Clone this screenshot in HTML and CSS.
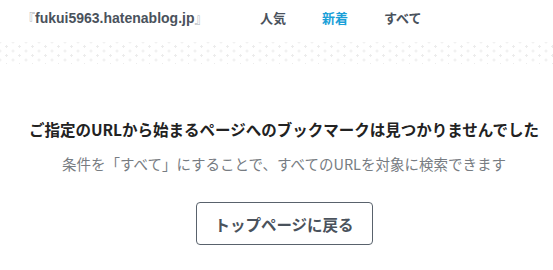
FILE: index.html
```html
<!DOCTYPE html>
<html lang="ja">
<head>
<meta charset="utf-8">
<title>fukui5963.hatenablog.jp</title>
<link rel="stylesheet" href="styles.css">
</head>
<body>
<header class="header">
  <div class="logo"><span class="bracket">『</span>fukui5963.hatenablog.jp<span class="bracket">』</span></div>
  <nav class="nav">
    <a class="nav-item">人気</a>
    <a class="nav-item active">新着</a>
    <a class="nav-item">すべて</a>
  </nav>
</header>
<div class="dots"></div>
<main class="main">
  <h1 class="title">ご指定のURLから始まるページへのブックマークは見つかりませんでした</h1>
  <p class="sub">条件を「すべて」にすることで、すべてのURLを対象に検索できます</p>
  <a class="btn">トップページに戻る</a>
</main>
</body>
</html>
```
FILE: styles.css
```css
html, body {
  margin: 0;
  padding: 0;
  background: #fff;
}
body {
  font-family: "Noto Sans CJK JP", "Noto Sans", sans-serif;
  color: #25292e;
}
.header {
  display: flex;
  align-items: center;
  height: 34px;
  padding-left: 22px;
}
.logo {
  font-family: "Liberation Sans", "Noto Sans CJK JP", sans-serif;
  font-weight: bold;
  font-size: 14px;
  color: #4a525c;
  width: 238px;
}
.bracket {
  color: #a9aeb4;
  font-family: "Noto Sans CJK JP", sans-serif;
  font-weight: normal;
  font-size: 13px;
}
.nav {
  display: flex;
  gap: 36px;
}
.nav-item {
  font-size: 13px;
  font-weight: bold;
  color: #4a525c;
}
.nav-item.active {
  color: #1aa0d8;
}
.dots {
  margin-top: 8px;
  height: 22px;
  background-image:
    radial-gradient(circle, #ececec 1px, transparent 1.3px),
    radial-gradient(circle, #ececec 1px, transparent 1.3px);
  background-size: 13px 9px;
  background-position: 0 0, 6.5px 4.5px;
}
.main {
  display: flex;
  flex-direction: column;
  align-items: center;
  padding-left: 15px;
  padding-top: 54px;
}
.title {
  margin: 0;
  font-size: 15.5px;
  font-weight: bold;
  color: #222;
  line-height: 22px;
}
.sub {
  margin: 13px 0 0;
  font-size: 14.5px;
  color: #777c82;
  line-height: 22px;
}
.btn {
  margin-top: 27px;
  box-sizing: border-box;
  width: 177px;
  height: 43px;
  display: flex;
  align-items: center;
  justify-content: center;
  border: 1px solid #59626c;
  border-radius: 4px;
  font-size: 15.5px;
  font-weight: bold;
  color: #4a525c;
}
```
